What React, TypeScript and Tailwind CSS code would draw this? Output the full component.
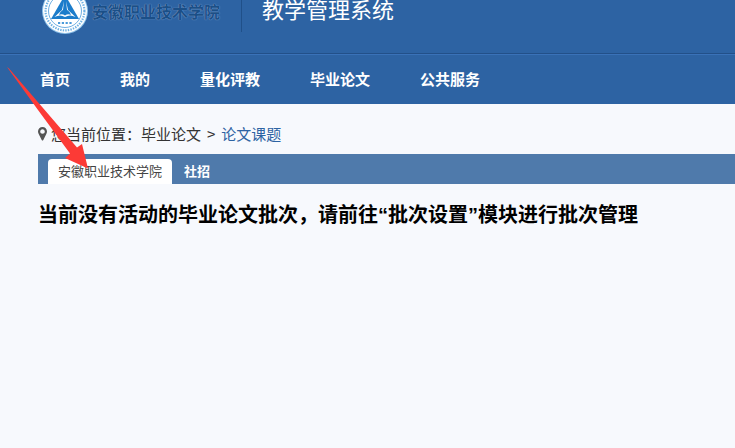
const navItems = ['首页', '我的', '量化评教', '毕业论文', '公共服务'];

const SchoolBadge = () => (
  <svg className="h-[46px] w-[46px] shrink-0" viewBox="0 0 46 46" aria-hidden="true">
    <circle cx="23" cy="23" r="23" fill="#8fc3ea" />
    <circle cx="23" cy="23" r="22" fill="#fff" />
    <circle cx="23" cy="23" r="19.4" fill="none" stroke="#6fb1e2" strokeWidth="2.2" strokeDasharray="1.4 1.2" />
    <circle cx="23" cy="23" r="16.5" fill="#fff" stroke="#4a9bdb" strokeWidth="0.8" />
    <path d="M23 7 L26 12 L37 31 H9 L20 12 Z" fill="#1b7ccb" />
    <path d="M22 13 L20 22 L12.500 29 Q18 26 23 29 Q28 26 33.500 29 L26 22 L24 13 L25 22 H21 Z" fill="#fff" />
    <path d="M17 27 Q19 21.500 23 21.500 Q27 21.500 29 27 Q26 25.500 23 27.500 Q20 25.500 17 27 Z" fill="#1b7ccb" />
    <path d="M16 35 H30" stroke="#4a9bdb" strokeWidth="2.2" strokeDasharray="2.2 1.6" />
  </svg>
);

const PinIcon = () => (
  <svg className="h-[14px] w-[9px]" viewBox="0 0 9 14" aria-hidden="true">
    <path
      fillRule="evenodd"
      fill="#555"
      d="M4.5 0 C7 0 9 2 9 4.500 C9 5.500 8.700 6.300 8.300 7 L5.300 13 Q4.500 14 3.700 13 L0.700 7 C0.300 6.300 0 5.500 0 4.500 C0 2 2 0 4.500 0 Z M4.500 2.200 C3.200 2.200 2.200 3.200 2.200 4.500 C2.200 5.800 3.200 6.800 4.500 6.800 C5.800 6.800 6.800 5.800 6.800 4.500 C6.800 3.200 5.800 2.200 4.500 2.200 Z"
    />
  </svg>
);

const PointerArrow = () => (
  <svg className="pointer-events-none absolute left-0 top-16 h-[108px] w-[96px]" viewBox="0 0 96 108" aria-hidden="true">
    <path d="M7 3 L9 4.500 L77 83.500 L82 80 L88 104.500 L65 94 L70 89.500 L38 46 Z" fill="#fc3a36" />
  </svg>
);

export default function App() {
  return (
    <div className="relative min-h-screen overflow-hidden bg-[#f7f9fd] font-['Noto_Sans_CJK_SC',sans-serif]">
      <header className="bg-[#2d63a3] text-white">
        <div className="flex h-[54px] items-start border-b border-[#225089] pl-[42px]">
          <div className="-mt-3 flex items-center">
            <SchoolBadge />
            <span className="ml-1 whitespace-nowrap text-base leading-6 font-bold text-[#1b4f87] [text-shadow:0_0_1px_#a3c0e0]">
              安徽职业技术学院
            </span>
          </div>
          <div className="ml-[21px] h-8 border-l border-[#205089]" />
          <h1 className="ml-5 whitespace-nowrap text-[22px] leading-4">教学管理系统</h1>
        </div>
        <nav className="flex h-[50px] items-center gap-[50px] border-t border-[#3a72b8] pl-10 text-[15px] font-bold">
          {navItems.map((item) => (
            <a key={item} href="#" className="whitespace-nowrap">
              {item}
            </a>
          ))}
        </nav>
      </header>

      <main className="pl-[38px]">
        <div className="flex h-[50px] items-center pt-2.5 text-[15px] text-[#333]">
          <PinIcon />
          <span className="ml-1">您当前位置：</span>
          <span>毕业论文</span>
          <span className="mx-1.5">&gt;</span>
          <a href="#" className="text-[#2d63a3]">
            论文课题
          </a>
        </div>
        <div className="flex h-[30px] items-end gap-0.5 bg-[#4f7aab] pl-2.5 text-[13px]">
          <button type="button" className="h-[25px] rounded-t bg-white px-2.5 pb-0.5 text-[#444]">
            安徽职业技术学院
          </button>
          <button type="button" className="h-[25px] px-2.5 pb-0.5 font-bold text-white">
            社招
          </button>
        </div>
        <h2 className="mt-4 font-['Liberation_Sans','Noto_Sans_CJK_SC',sans-serif] text-xl leading-[30px] font-bold text-black">
          当前没有活动的毕业论文批次，请前往“批次设置”模块进行批次管理
        </h2>
      </main>
      <PointerArrow />
    </div>
  );
}
